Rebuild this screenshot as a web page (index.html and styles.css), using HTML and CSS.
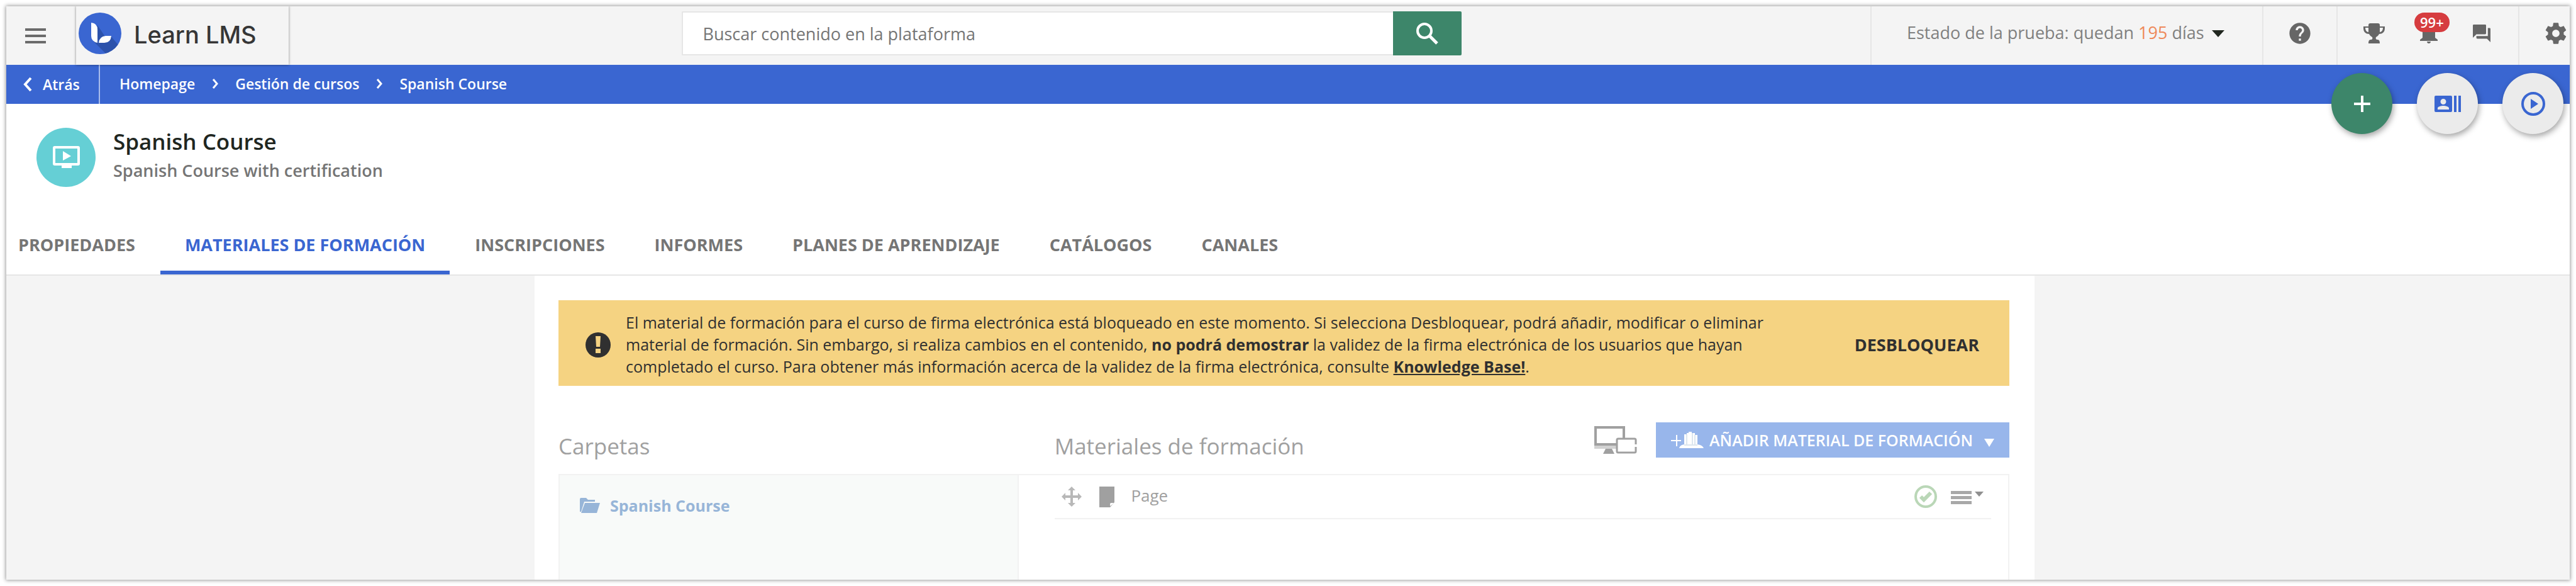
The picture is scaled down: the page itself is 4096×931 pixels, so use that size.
FILE: index.html
```html
<!DOCTYPE html>
<html lang="es">
<head>
<meta charset="utf-8">
<title>Spanish Course - Learn LMS</title>
<meta name="viewport" content="width=device-width, initial-scale=1">
<link rel="stylesheet" href="styles.css">
</head>
<body>
<div class="frame">
  <header class="topbar">
    <button class="menu-button" type="button" aria-label="Menú">
      <svg width="33" height="24" viewBox="0 0 33 24" aria-hidden="true"><path d="M0 0h33v4H0zM0 10h33v4H0zM0 20h33v4H0z" fill="currentColor"/></svg>
    </button>
    <a class="brand" href="#">
      <svg width="68" height="66" viewBox="0 0 68 66" aria-hidden="true">
        <defs><clipPath id="disc"><ellipse cx="34" cy="33" rx="34" ry="33"/></clipPath></defs>
        <ellipse cx="34" cy="33" rx="34" ry="33" fill="#3a66d1"/>
        <path clip-path="url(#disc)" d="M30 20L42 38 51 37 70 60V66H44L24 46z" fill="#2c52ab"/>
        <path d="M20 16Q30 17 30 27V48Q20 46 20 37z" fill="#fff"/>
        <path d="M32 48Q33 38 43 37H52Q51 48 41 48z" fill="#fff"/>
      </svg>
      <span class="brand-name">Learn LMS</span>
    </a>
    <div class="search-zone">
      <form class="search" onsubmit="return false">
        <input class="search-input" type="text" placeholder="Buscar contenido en la plataforma" aria-label="Buscar contenido en la plataforma">
        <button class="search-button" type="submit" aria-label="Buscar">
          <svg width="35" height="35" viewBox="0 0 35 35" fill="none" stroke="currentColor" aria-hidden="true"><circle cx="13" cy="13" r="11" stroke-width="4"/><path d="M21 21l12 12" stroke-width="5"/></svg>
        </button>
      </form>
    </div>
    <button class="trial" type="button">
      <span>Estado de la prueba: quedan <span class="trial-days">195</span> días</span>
      <svg class="trial-caret" width="20" height="11" viewBox="0 0 20 11" aria-hidden="true"><path d="M0 0h20L10 11z" fill="#20261f"/></svg>
    </button>
    <div class="tool-group tool-help">
      <button class="tool" type="button" aria-label="Ayuda">
        <svg width="40" height="40" viewBox="0 0 24 24" fill="currentColor" aria-hidden="true"><path d="M12 2C6.480 2 2 6.480 2 12s4.480 10 10 10 10-4.480 10-10S17.520 2 12 2zm1 17h-2v-2h2v2zm2.070-7.750l-.9.920C13.450 12.900 13 13.500 13 15h-2v-.5c0-1.100.45-2.100 1.170-2.830l1.240-1.260c.37-.36.59-.86.59-1.410 0-1.100-.9-2-2-2s-2 .9-2 2H8c0-2.210 1.790-4 4-4s4 1.790 4 4c0 .88-.36 1.680-.93 2.250z"/></svg>
      </button>
    </div>
    <div class="tool-group tool-alerts">
      <button class="tool" type="button" aria-label="Logros">
        <svg width="34" height="32" viewBox="0 0 34 32" aria-hidden="true"><path d="M11 0h12q3 0 3 3v2h8v3c0 6-4 9-9 9-1 2-3 4-5 5-1 2 0 4 2 4 3 0 4 2 4 6H8c0-4 1-6 4-6 2 0 3-2 2-4-2-1-4-3-5-5-5 0-9-3-9-9V5h8V3q0-3 3-3zM3 7c0 4 2 7 5 7V7zM31 7h-5v7c3 0 5-3 5-7z" fill="currentColor" fill-rule="evenodd"/></svg>
      </button>
      <button class="tool" type="button" aria-label="Notificaciones">
        <svg width="28" height="32" viewBox="0 0 28 32" aria-hidden="true"><path d="M14 0c-6 2-10 6-10 12v11l-4 3v2h28v-2l-4-3V12C24 6 20 2 14 0zM11 29h6c0 4-6 4-6 0z" fill="currentColor"/></svg>
        <span class="badge">99+</span>
      </button>
      <button class="tool" type="button" aria-label="Mensajes">
        <svg width="28" height="28" viewBox="2 2 20 20" fill="currentColor" aria-hidden="true"><path d="M21 6h-2v9H6v2c0 .55.45 1 1 1h11l4 4V7c0-.55-.45-1-1-1zm-4 6V3c0-.55-.45-1-1-1H3c-.55 0-1 .45-1 1v14l4-4h10c.55 0 1-.45 1-1z"/></svg>
      </button>
    </div>
    <div class="tool-group tool-settings">
      <button class="tool" type="button" aria-label="Configuración">
        <svg width="40" height="40" viewBox="0 0 24 24" fill="currentColor" aria-hidden="true"><path d="M19.430 12.980c.04-.32.070-.64.070-.98s-.03-.66-.07-.98l2.110-1.650c.19-.15.24-.42.12-.64l-2-3.460c-.12-.22-.39-.3-.61-.22l-2.490 1c-.52-.4-1.080-.73-1.690-.98l-.38-2.650C14.460 2.180 14.250 2 14 2h-4c-.25 0-.46.18-.49.42l-.38 2.650c-.61.25-1.170.59-1.690.98l-2.490-1c-.23-.09-.49 0-.61.22l-2 3.460c-.13.22-.07.49.12.64l2.110 1.650c-.04.32-.07.65-.07.98s.03.66.07.98l-2.110 1.650c-.19.15-.24.42-.12.64l2 3.460c.12.22.39.3.61.22l2.490-1c.52.4 1.080.73 1.690.98l.38 2.650c.03.24.24.42.49.42h4c.25 0 .46-.18.49-.42l.38-2.650c.61-.25 1.170-.59 1.690-.98l2.490 1c.23.09.49 0 .61-.22l2-3.460c.12-.22.07-.49-.12-.64l-2.110-1.650zM12 15.500c-1.930 0-3.500-1.570-3.500-3.500s1.570-3.500 3.500-3.500 3.500 1.570 3.500 3.500-1.570 3.500-3.500 3.500z"/></svg>
      </button>
    </div>
  </header>

  <div class="bluebar">
    <a class="back" href="#">
      <svg width="16" height="24" viewBox="0 0 16 24" fill="none" aria-hidden="true"><path d="M13 2L4 12l9 10" stroke="currentColor" stroke-width="4"/></svg>
      <span>Atrás</span>
    </a>
    <nav class="crumbs" aria-label="Ruta">
      <a href="#">Homepage</a>
      <svg width="10" height="16" viewBox="0 0 10 16" fill="none" aria-hidden="true"><path d="M2 1l6 7-6 7" stroke="currentColor" stroke-width="3"/></svg>
      <a href="#">Gestión de cursos</a>
      <svg width="10" height="16" viewBox="0 0 10 16" fill="none" aria-hidden="true"><path d="M2 1l6 7-6 7" stroke="currentColor" stroke-width="3"/></svg>
      <a href="#">Spanish Course</a>
    </nav>
    <div class="fabs">
      <button class="fab fab-add" type="button" aria-label="Añadir">
        <svg width="26" height="26" viewBox="0 0 26 26" aria-hidden="true"><path d="M11 0h4v11h11v4H15v11h-4V15H0v-4h11z" fill="currentColor"/></svg>
      </button>
      <button class="fab" type="button" aria-label="Sesiones">
        <svg width="42" height="26" viewBox="0 0 42 26" fill="currentColor" aria-hidden="true"><path fill-rule="evenodd" d="M2 0h24q2 0 2 2v22q0 2-2 2H2q-2 0-2-2V2q0-2 2-2zM14 5a4 4 0 1 0 0 9 4 4 0 0 0 0-9zM5 22h18v-2c0-3-6-4-9-4s-9 1-9 4z"/><path d="M31 0h4v26h-4zM38 0h4v26h-4z"/></svg>
      </button>
      <button class="fab" type="button" aria-label="Reproducir">
        <svg width="38" height="38" viewBox="0 0 38 38" aria-hidden="true"><circle cx="19" cy="19" r="17" fill="none" stroke="currentColor" stroke-width="4"/><path d="M15 11l12 8-12 8z" fill="currentColor"/></svg>
      </button>
    </div>
  </div>

  <section class="course">
    <div class="course-icon">
      <svg width="43" height="36" viewBox="0 0 43 36" aria-hidden="true"><path fill="#fff" fill-rule="evenodd" d="M3 0h37q3 0 3 3v25q0 3-3 3H30v4H14v-4H3q-3 0-3-3V3q0-3 3-3zM4 4v23h35V4zM16 8l13 8-13 7z"/></svg>
    </div>
    <div class="course-text">
      <h1 class="course-title">Spanish Course</h1>
      <p class="course-sub">Spanish Course with certification</p>
    </div>
  </section>

  <nav class="tabs" aria-label="Secciones del curso">
    <a class="tab" href="#">PROPIEDADES</a>
    <a class="tab tab-active" href="#" aria-current="page">MATERIALES DE FORMACIÓN</a>
    <a class="tab" href="#">INSCRIPCIONES</a>
    <a class="tab" href="#">INFORMES</a>
    <a class="tab" href="#">PLANES DE APRENDIZAJE</a>
    <a class="tab" href="#">CATÁLOGOS</a>
    <a class="tab" href="#">CANALES</a>
  </nav>

  <div class="backdrop">
    <main class="content">
      <div class="notice">
        <svg class="notice-icon" width="40" height="40" viewBox="0 0 40 40" aria-hidden="true"><circle cx="20" cy="20" r="20" fill="#303030"/><path d="M16 6h8l-1 17h-6zM16 26h8v7h-8z" fill="#f5d382"/></svg>
        <p class="notice-text">El material de formación para el curso de firma electrónica está bloqueado en este momento. Si selecciona Desbloquear, podrá añadir, modificar o eliminar material de formación. Sin embargo, si realiza cambios en el contenido, <strong>no podrá demostrar</strong> la validez de la firma electrónica de los usuarios que hayan completado el curso. Para obtener más información acerca de la validez de la firma electrónica, consulte <a href="#">Knowledge Base!</a>.</p>
        <button class="unlock" type="button">DESBLOQUEAR</button>
      </div>

      <div class="heads">
        <h2 class="head">Carpetas</h2>
        <div class="head-materials">
          <h2 class="head">Materiales de formación</h2>
          <div class="head-actions">
            <svg width="68" height="44" viewBox="0 0 68 44" aria-hidden="true"><path d="M0 29h36v7H0z" fill="#d2d2d2"/><path d="M2 2h45v27H2z" fill="#fff" stroke="#a0a0a0" stroke-width="4"/><path d="M18 36h10l4 8H14z" fill="#a0a0a0"/><rect x="36" y="20" width="30" height="22" rx="2" fill="#fff" stroke="#a0a0a0" stroke-width="3"/><path d="M64 29h4v4h-4z" fill="#fff"/></svg>
            <button class="add-button" type="button">
              <svg width="52" height="26" viewBox="0 0 52 26" aria-hidden="true"><path d="M8 5h2v8h6v2h-6v8H8v-8H0v-2h8z" fill="#fff"/><path d="M13 26q1-5 8-6V4h4V2h3V0h5v2h5v3h4v15q8 1 10 6z" fill="#fff"/><path d="M25 4v16M34 2v18M38 5v15" stroke="#b9cddf" stroke-width="1"/><path d="M21 21h21" stroke="#b9cddf" stroke-width="1"/></svg>
              <span>AÑADIR MATERIAL DE FORMACIÓN</span>
              <svg class="add-caret" width="16" height="13" viewBox="0 0 16 13" aria-hidden="true"><path d="M0 0h16L8 13z" fill="#fff"/></svg>
            </button>
          </div>
        </div>
      </div>

      <div class="panel">
        <div class="folders">
          <a class="folder" href="#">
            <svg width="32" height="24" viewBox="0 0 32 24" aria-hidden="true"><path d="M0 22V2q0-2 2-2h8l3 3h11v3H7L2 22z" fill="#97b5d8"/><path d="M8 8h24l-5 16H2z" fill="#97b5d8"/></svg>
            <span>Spanish Course</span>
          </a>
        </div>
        <ul class="materials">
          <li class="material">
            <svg class="move" width="32" height="32" viewBox="0 0 32 32" aria-hidden="true"><path d="M16 0l6 6h-4v8h8v-4l6 6-6 6v-4h-8v8h4l-6 6-6-6h4v-8H6v4l-6-6 6-6v4h8V6h-4z" fill="#b8b8b8"/></svg>
            <svg width="24" height="33" viewBox="0 0 24 33" aria-hidden="true"><path d="M0 0h24v25l-7 8H0z" fill="#a0a0a0"/><path d="M17 31v-3q0-2 2-2h4q-2 3-6 5z" fill="#fff"/></svg>
            <span class="material-name">Page</span>
            <svg class="ok" width="36" height="36" viewBox="0 0 36 36" fill="none" aria-hidden="true"><circle cx="18" cy="18" r="16" stroke="#bad7b7" stroke-width="4"/><path d="M10 18l5 5 11-11" stroke="#bad7b7" stroke-width="6"/></svg>
            <button class="row-menu" type="button" aria-label="Opciones">
              <svg width="52" height="22" viewBox="0 0 52 22" aria-hidden="true"><path d="M0 0h33v5H0zM0 8h33v5H0zM0 16h33v5H0z" fill="#a8a8a8"/><path d="M38 1h14l-7 8z" fill="#909090"/></svg>
            </button>
          </li>
        </ul>
      </div>
    </main>
  </div>
</div>
</body>
</html>
```
FILE: styles.css
```css
* { box-sizing: border-box; }

body {
  margin: 0;
  padding: 10px;
  min-height: 100vh;
  display: flex;
  background: #fff;
  color: #303030;
  font-family: "Open Sans", "Noto Sans", sans-serif;
  font-size: 27px;
}

h1, h2, p, ul { margin: 0; padding: 0; }
ul { list-style: none; }
a { color: inherit; text-decoration: none; }
svg { display: block; flex: none; }
button {
  margin: 0;
  padding: 0;
  border: 0;
  background: none;
  color: inherit;
  font: inherit;
  cursor: pointer;
}

.frame {
  flex: 1;
  min-width: 0;
  display: flex;
  flex-direction: column;
  background: #fff;
  box-shadow: 0 0 6px 1px rgba(0, 0, 0, .4);
}

/* Top bar */
.topbar {
  display: flex;
  height: 93px;
  background: #f4f4f4;
}
.menu-button {
  width: 111px;
  padding-left: 30px;
  color: #6b6b6b;
}
.brand {
  position: relative;
  z-index: 1;
  display: flex;
  align-items: center;
  gap: 20px;
  width: 338px;
  padding: 0 0 8px 4px;
  background: #f4f4f4;
  box-shadow: 0 0 4px rgba(0, 0, 0, .45);
  clip-path: inset(0 -6px -4px -6px);
}
.brand-name {
  padding-top: 4px;
  color: #363636;
  font-family: Inter, "Open Sans", sans-serif;
  font-size: 38px;
  font-weight: 500;
}
.search-zone {
  flex: 1;
  display: flex;
  justify-content: center;
  padding: 8px 26px 0 0;
}
.search {
  display: flex;
  width: 1240px;
  height: 70px;
}
.search-input {
  flex: 1;
  min-width: 0;
  padding: 0 32px;
  border: 2px solid #e6e6e6;
  border-right: 0;
  background: #fff;
  font: inherit;
}
.search-input::placeholder { color: #757575; opacity: 1; }
.search-button {
  display: grid;
  place-items: center;
  width: 109px;
  border-radius: 0 2px 2px 0;
  background: #3d866a;
  color: #fff;
}
.trial {
  display: flex;
  align-items: center;
  gap: 12px;
  width: 623px;
  padding: 0 0 10px 56px;
  border-left: 2px solid #e6e6e6;
  color: #808080;
  white-space: nowrap;
}
.trial-days { color: #ee8959; }
.trial-caret { margin-top: 4px; }
.tool-group {
  display: flex;
  align-items: center;
  padding-bottom: 8px;
  border-left: 2px solid #e6e6e6;
  color: #666;
}
.tool { position: relative; }
.tool-help { width: 118px; padding-left: 38px; }
.tool-alerts { width: 289px; padding-left: 41px; gap: 56px; }
.tool-settings { width: 82px; padding-left: 38px; }
.badge {
  position: absolute;
  left: -9px;
  top: -17px;
  height: 31px;
  padding: 0 9px;
  border-radius: 16px;
  background: #d63c3f;
  color: #fff;
  font-size: 22px;
  font-weight: 600;
  line-height: 30px;
}

/* Breadcrumb bar */
.bluebar {
  position: relative;
  display: flex;
  height: 62px;
  background: #3a66d1;
  color: #fff;
  font-size: 23px;
  font-weight: 600;
}
.back {
  display: flex;
  align-items: center;
  gap: 16px;
  width: 149px;
  padding-left: 26px;
  border-right: 2px solid #a9bdec;
}
.crumbs {
  display: flex;
  align-items: center;
  gap: 27px;
  padding: 0 0 2px 31px;
}
.fabs {
  position: absolute;
  right: 10px;
  top: 13px;
  display: flex;
  gap: 39px;
}
.fab {
  display: grid;
  place-items: center;
  width: 97px;
  height: 97px;
  border-radius: 50%;
  background: #ebebeb;
  color: #3a66d1;
  box-shadow: 2px 4px 10px rgba(0, 0, 0, .35);
}
.fab-add { background: #3d866a; color: #fff; }

/* Course heading */
.course {
  display: flex;
  gap: 28px;
  padding: 38px 48px 0;
}
.course-icon {
  display: grid;
  place-items: center;
  width: 94px;
  height: 94px;
  border-radius: 50%;
  background: #65cfd5;
}
.course-title {
  color: #20261f;
  font-size: 35px;
  font-weight: 600;
  line-height: 44px;
}
.course-sub {
  color: #757575;
  font-size: 27px;
  font-weight: 600;
  line-height: 48px;
}

/* Tabs */
.tabs {
  display: flex;
  gap: 1px;
  margin-top: 43px;
  border-bottom: 2px solid #e6e6e6;
  padding-left: 19px;
}
.tab {
  height: 96px;
  padding: 31px 39px 0;
  color: #757575;
  font-weight: 700;
  line-height: 36px;
  white-space: nowrap;
}
.tab:first-child { padding-left: 0; }
.tab-active {
  border-bottom: 6px solid #3a66d1;
  color: #3a66d1;
}

/* Content */
.backdrop {
  flex: 1;
  display: grid;
  grid-template-columns: minmax(0, 840fr) minmax(0, 2385fr) minmax(0, 851fr);
  background: #f4f4f4;
}
.content {
  grid-column: 2;
  display: flex;
  flex-direction: column;
  padding: 39px 40px 0 38px;
  background: #fff;
}
.notice {
  display: flex;
  align-items: center;
  min-height: 136px;
  padding: 0 48px 0 43px;
  background: #f5d382;
}
.notice-icon { margin-top: 5px; }
.notice-text {
  flex: 1;
  max-width: 1850px;
  margin-left: 24px;
  padding-top: 4px;
  font-size: 25px;
  line-height: 35px;
}
.notice-text a { font-weight: 700; text-decoration: underline; }
.unlock {
  margin-left: auto;
  padding-top: 5px;
  font-weight: 700;
}
.heads {
  display: grid;
  grid-template-columns: minmax(0, 789fr) minmax(0, 1519fr);
  align-items: end;
  margin-top: 58px;
  height: 82px;
}
.head {
  color: #a0a0a0;
  font-size: 35px;
  font-weight: 400;
  line-height: 48px;
  padding-bottom: 20px;
}
.head-materials {
  display: flex;
  justify-content: space-between;
  align-items: end;
}
.head-actions {
  display: flex;
  align-items: center;
  gap: 30px;
  padding-bottom: 26px;
}
.add-button {
  display: flex;
  align-items: center;
  height: 56px;
  padding: 0 24px;
  gap: 9px;
  background: #98b6eb;
  color: #fff;
  font-size: 25px;
  font-weight: 600;
  white-space: nowrap;
}
.add-caret { margin: 8px 0 0 9px; }
.panel {
  flex: 1;
  display: grid;
  grid-template-columns: minmax(0, 732fr) minmax(0, 1576fr);
  border: 2px solid #f2f2f2;
  border-bottom: 0;
}
.folders {
  padding: 28px 32px;
  border-right: 2px solid #f2f2f2;
  background: #f8faf9;
}
.folder {
  display: flex;
  align-items: center;
  gap: 16px;
  color: #97b5d8;
  font-size: 25px;
  font-weight: 700;
  line-height: 40px;
}
.materials { padding: 0 27px 0 57px; }
.material {
  display: flex;
  align-items: center;
  height: 70px;
  padding: 0 12px 0 11px;
  border-bottom: 2px solid #f2f2f2;
  color: #a0a0a0;
  font-size: 26px;
}
.move { margin-right: 28px; }
.material-name { margin-left: 26px; padding-bottom: 4px; }
.ok { margin-left: auto; }
.row-menu { margin: 4px 0 0 22px; }
```
